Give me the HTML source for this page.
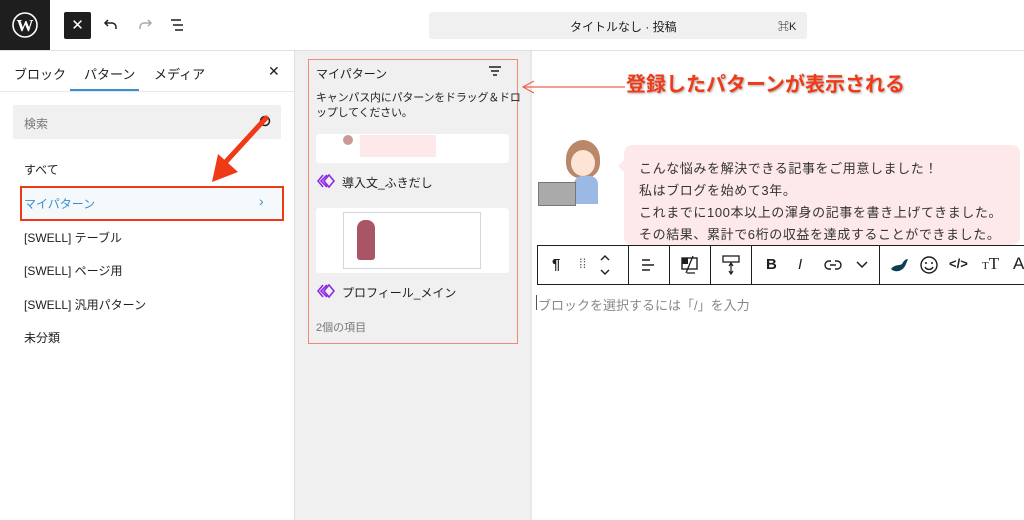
<!DOCTYPE html>
<html><head><meta charset="utf-8"><style>
*{box-sizing:border-box;margin:0;padding:0}
body{width:1024px;height:520px;overflow:hidden;position:relative;background:#fff;font-family:"Liberation Sans","Noto Sans CJK JP",sans-serif;color:#1e1e1e}
.a{position:absolute}
.t{font-size:12px;white-space:nowrap}
</style></head><body>
<div class="a" style="left:0;top:0;width:50px;height:50px;background:#1e1e1e"></div>
<svg class="a" style="left:12px;top:12px" width="26" height="26" viewBox="0 0 26 26"><circle cx="13" cy="13" r="12" fill="none" stroke="#fff" stroke-width="1.6"/><text x="13" y="19" text-anchor="middle" fill="#fff" font-size="17" font-weight="bold" font-family="Liberation Serif">W</text></svg>
<div class="a" style="left:64px;top:12px;width:27px;height:27px;background:#1e1e1e;border-radius:2px;color:#fff;font-size:15px;text-align:center;line-height:27px">✕</div>
<svg class="a" style="left:102px;top:16px" width="18" height="18" viewBox="0 0 18 18"><path d="M6 4L3 7l3 3M3 7h7a4 4 0 0 1 4 4v2" fill="none" stroke="#1e1e1e" stroke-width="1.5"/></svg>
<svg class="a" style="left:136px;top:16px" width="18" height="18" viewBox="0 0 18 18"><path d="M12 4l3 3-3 3M15 7H8a4 4 0 0 0-4 4v2" fill="none" stroke="#aaa" stroke-width="1.5"/></svg>
<svg class="a" style="left:169px;top:16px" width="18" height="18" viewBox="0 0 18 18"><path d="M2 4h10M4 9h10M6 14h8" stroke="#1e1e1e" stroke-width="1.5"/></svg>
<div class="a" style="left:429px;top:12px;width:378px;height:27px;background:#f0f0f0;border-radius:3px"></div>
<div class="a t" style="left:570px;top:18px;color:#1e1e1e">タイトルなし · 投稿</div>
<div class="a t" style="left:778px;top:18px;font-size:11px">⌘K</div>
<div class="a" style="left:0;top:50px;width:1024px;height:1px;background:#e0e0e0"></div>
<div class="a" style="left:294px;top:51px;width:1px;height:469px;background:#e0e0e0"></div>
<div class="a t" style="left:14px;top:64px;font-size:13px">ブロック</div>
<div class="a t" style="left:84px;top:64px;font-size:13px">パターン</div>
<div class="a t" style="left:154px;top:64px;font-size:13px">メディア</div>
<div class="a t" style="left:268px;top:63px;font-size:14px">✕</div>
<div class="a" style="left:70px;top:89px;width:69px;height:2px;background:#3890d0"></div>
<div class="a" style="left:0;top:91px;width:294px;height:1px;background:#e8e8e8"></div>
<div class="a" style="left:13px;top:105px;width:268px;height:34px;background:#f0f0f0;border-radius:2px"></div>
<div class="a t" style="left:24px;top:115px;color:#777">検索</div>
<svg class="a" style="left:256px;top:114px" width="16" height="16" viewBox="0 0 16 16"><circle cx="9" cy="7" r="4.5" fill="none" stroke="#1e1e1e" stroke-width="1.5"/><path d="M6 10L2 14" stroke="#1e1e1e" stroke-width="1.5"/></svg>
<div class="a t" style="left:24px;top:161px">すべて</div>
<div class="a" style="left:20px;top:186px;width:264px;height:35px;background:#f5f9fc;border:2px solid #f03a17"></div>
<div class="a t" style="left:24px;top:195px;color:#3890d0">マイパターン</div>
<div class="a t" style="left:259px;top:193px;color:#3890d0;font-size:14px">›</div>
<div class="a t" style="left:24px;top:229px">[SWELL] テーブル</div>
<div class="a t" style="left:24px;top:262px">[SWELL] ページ用</div>
<div class="a t" style="left:24px;top:296px">[SWELL] 汎用パターン</div>
<div class="a t" style="left:24px;top:329px">未分類</div>
<svg class="a" style="left:200px;top:110px" width="80" height="80" viewBox="0 0 80 80"><path d="M66 8L22 56" stroke="#f03a17" stroke-width="5" stroke-linecap="round"/><path d="M12 72L18 44L38 62Z" fill="#f03a17"/></svg>
<div class="a" style="left:295px;top:51px;width:236px;height:469px;background:#f0f0f0"></div>
<div class="a" style="left:308px;top:59px;width:210px;height:285px;border:1.5px solid #f08a78"></div>
<div class="a t" style="left:316px;top:65px">マイパターン</div>
<svg class="a" style="left:488px;top:65px" width="14" height="12" viewBox="0 0 14 12"><path d="M1 2h12M3 6h8M5 10h4" stroke="#1e1e1e" stroke-width="1.4"/></svg>
<div class="a t" style="left:316px;top:91px;line-height:15px;font-size:11px;letter-spacing:-0.2px">キャンパス内にパターンをドラッグ＆ドロ<br>ップしてください。</div>
<div class="a" style="left:316px;top:134px;width:193px;height:29px;background:#fff;border-radius:3px"></div>
<div class="a" style="left:343px;top:135px;width:10px;height:10px;background:#c99;border-radius:50%"></div>
<div class="a" style="left:360px;top:135px;width:76px;height:22px;background:#fde8ea"></div>
<svg class="a" style="left:317px;top:174px" width="18" height="14" viewBox="0 0 18 14"><path d="M6 1L1 7l5 6M10 1L4 7l6 6M12 1l5 6-5 6-5-6z" fill="none" stroke="#8b2be2" stroke-width="1.6"/></svg>
<div class="a t" style="left:342px;top:174px">導入文_ふきだし</div>
<div class="a" style="left:316px;top:208px;width:193px;height:65px;background:#fff;border-radius:3px"></div>
<div class="a" style="left:343px;top:212px;width:138px;height:57px;border:1px solid #cfd8e0"></div>
<div class="a" style="left:357px;top:220px;width:18px;height:40px;background:#a56;border-radius:8px 8px 3px 3px"></div>
<svg class="a" style="left:317px;top:284px" width="18" height="14" viewBox="0 0 18 14"><path d="M6 1L1 7l5 6M10 1L4 7l6 6M12 1l5 6-5 6-5-6z" fill="none" stroke="#8b2be2" stroke-width="1.6"/></svg>
<div class="a t" style="left:342px;top:284px">プロフィール_メイン</div>
<div class="a t" style="left:316px;top:319px;color:#777;font-size:11px">2個の項目</div>
<div class="a" style="left:530px;top:51px;width:2px;height:469px;background:#e8e8e8"></div>
<svg class="a" style="left:520px;top:80px" width="110" height="14" viewBox="0 0 110 14"><path d="M105 7H3M14 1L3 7l11 6" fill="none" stroke="#f06050" stroke-width="1.2"/></svg>
<div class="a" style="left:626px;top:68px;color:#f03a17;font-size:20px;font-weight:bold;white-space:nowrap;text-shadow:1px 1px 2px #aaa">登録したパターンが表示される</div>
<div class="a" style="left:566px;top:140px;width:34px;height:38px;background:#b9876a;border-radius:50% 50% 40% 40%"></div>
<div class="a" style="left:571px;top:150px;width:24px;height:26px;background:#fde4d4;border-radius:50%"></div>
<div class="a" style="left:574px;top:176px;width:24px;height:28px;background:#9cb9e4;border-radius:8px 8px 0 0"></div>
<div class="a" style="left:538px;top:182px;width:38px;height:24px;background:#aaa;border:1px solid #777"></div>
<div class="a" style="left:624px;top:145px;width:396px;height:100px;background:#fde8ea;border-radius:8px"></div>
<div class="a" style="left:618px;top:160px;width:0;height:0;border:6px solid transparent;border-right-color:#fde8ea;border-left:0"></div>
<div class="a t" style="left:639px;top:158px;font-size:13px;line-height:22px;color:#333;letter-spacing:0.6px">こんな悩みを解決できる記事をご用意しました！<br>私はブログを始めて3年。<br>これまでに100本以上の渾身の記事を書き上げてきました。<br>その結果、累計で6桁の収益を達成することができました。</div>
<div class="a" style="left:537px;top:245px;width:495px;height:40px;background:#fff;border:1px solid #1e1e1e"></div>
<div class="a" style="left:628px;top:245px;width:1px;height:40px;background:#1e1e1e"></div>
<div class="a" style="left:669px;top:245px;width:1px;height:40px;background:#1e1e1e"></div>
<div class="a" style="left:710px;top:245px;width:1px;height:40px;background:#1e1e1e"></div>
<div class="a" style="left:751px;top:245px;width:1px;height:40px;background:#1e1e1e"></div>
<div class="a" style="left:879px;top:245px;width:1px;height:40px;background:#1e1e1e"></div>
<div class="a t" style="left:552px;top:256px;font-size:15px;font-weight:bold">¶</div>
<div class="a t" style="left:579px;top:256px;font-size:13px;color:#555">⁞⁞</div>
<svg class="a" style="left:598px;top:252px" width="14" height="26" viewBox="0 0 14 26"><path d="M3 8l4-4 4 4M3 18l4 4 4-4" fill="none" stroke="#1e1e1e" stroke-width="1.4"/></svg>
<svg class="a" style="left:640px;top:257px" width="16" height="16" viewBox="0 0 16 16"><path d="M2 3h8M2 8h12M2 13h8" stroke="#1e1e1e" stroke-width="1.4"/></svg>
<svg class="a" style="left:680px;top:255px" width="20" height="20" viewBox="0 0 20 20"><rect x="2" y="3" width="15" height="11" fill="none" stroke="#1e1e1e" stroke-width="1.4"/><path d="M2 3h6v6H2z" fill="#1e1e1e"/><path d="M13 1L6 18M7 18h8" stroke="#1e1e1e" stroke-width="1.3"/></svg>
<svg class="a" style="left:721px;top:254px" width="20" height="22" viewBox="0 0 20 22"><rect x="2" y="2" width="16" height="6" fill="none" stroke="#1e1e1e" stroke-width="1.3"/><path d="M10 9v11M8 12l2-3 2 3M8 17l2 3 2-3" fill="none" stroke="#1e1e1e" stroke-width="1.2"/></svg>
<div class="a t" style="left:766px;top:256px;font-size:15px;font-weight:bold">B</div>
<div class="a t" style="left:798px;top:256px;font-size:15px;font-style:italic">I</div>
<svg class="a" style="left:824px;top:258px" width="18" height="14" viewBox="0 0 18 14"><path d="M7 3H5a4 4 0 0 0 0 8h2M11 3h2a4 4 0 0 1 0 8h-2M6 7h6" fill="none" stroke="#1e1e1e" stroke-width="1.4"/></svg>
<svg class="a" style="left:855px;top:260px" width="14" height="10" viewBox="0 0 14 10"><path d="M2 2l5 5 5-5" fill="none" stroke="#1e1e1e" stroke-width="1.5"/></svg>
<svg class="a" style="left:889px;top:255px" width="20" height="20" viewBox="0 0 20 20"><path d="M2 14c4 4 12 3 15-5l2-5c-3 0-5 3-6 5-3 2-7 0-11 5z" fill="#0f3d52"/></svg>
<svg class="a" style="left:919px;top:255px" width="20" height="20" viewBox="0 0 20 20"><circle cx="10" cy="10" r="8" fill="none" stroke="#1e1e1e" stroke-width="1.4"/><circle cx="7" cy="8" r="1" fill="#1e1e1e"/><circle cx="13" cy="8" r="1" fill="#1e1e1e"/><path d="M6 12a4.5 4.5 0 0 0 8 0" fill="none" stroke="#1e1e1e" stroke-width="1.4"/></svg>
<div class="a t" style="left:949px;top:256px;font-size:13px;font-weight:bold">&lt;/&gt;</div>
<div class="a t" style="left:982px;top:254px;font-size:17px;font-family:'Liberation Serif',serif"><span style="font-size:11px">T</span>T</div>
<div class="a t" style="left:1013px;top:254px;font-size:17px">A</div>
<div class="a" style="left:536px;top:295px;width:1px;height:15px;background:#555"></div>
<div class="a t" style="left:538px;top:295px;font-size:13px;color:#888">ブロックを選択するには「/」を入力</div>
</body></html>
